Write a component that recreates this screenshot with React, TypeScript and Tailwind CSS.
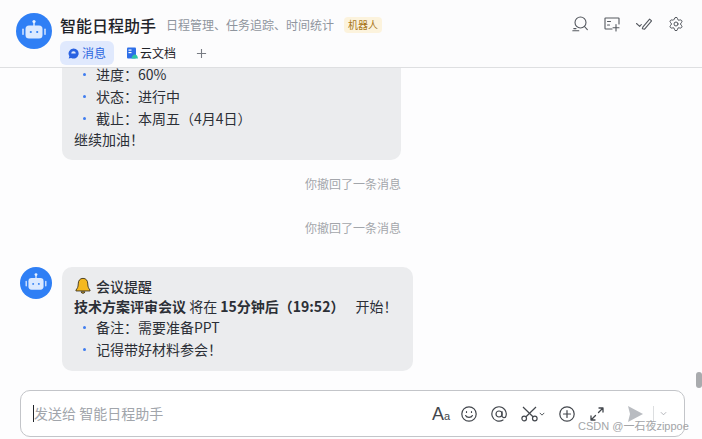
import { Settings } from "lucide-react";

const font = { fontFamily: '"Noto Sans CJK SC", sans-serif' };

function Bot({ big }: { big?: boolean }) {
  return (
    <div className={big ? "h-9 w-9 shrink-0 rounded-full bg-[#2f7ff5]" : "h-8 w-8 shrink-0 rounded-full bg-[#2f7ff5]"}>
      <svg viewBox="0 0 36 36" className="h-full w-full">
        <circle cx="18" cy="8.5" r="1.6" fill="#e8f1ff" />
        <rect x="17.3" y="9" width="1.4" height="4" fill="#e8f1ff" />
        <rect x="9.5" y="12.5" width="17" height="13" rx="3.5" fill="#dbe9ff" />
        <rect x="6.2" y="15.5" width="1.6" height="6.5" rx="0.8" fill="#cfe1ff" />
        <rect x="28.2" y="15.5" width="1.6" height="6.5" rx="0.8" fill="#cfe1ff" />
        <circle cx="14.8" cy="19" r="1.1" fill="#2f7ff5" />
        <circle cx="21.2" cy="19" r="1.1" fill="#2f7ff5" />
      </svg>
    </div>
  );
}

function Li({ children }: { children: React.ReactNode }) {
  return (
    <div className="flex h-[22px] items-center">
      <span className="ml-[9px] mr-[10px] h-[3px] w-[3px] rounded-full bg-[#3f7df0]" />
      <span>{children}</span>
    </div>
  );
}

function Revoked() {
  return <div className="pr-[301px] text-right text-[12px] leading-[18px] text-[#a3a6ab]">你撤回了一条消息</div>;
}

export default function App() {
  return (
    <div className="relative flex h-[439px] w-[702px] flex-col overflow-hidden bg-[#fdfdfe]" style={font}>
      <header className="flex h-[68px] shrink-0 border-b border-[#dedfe1] bg-[#fcfcfd]">
        <div className="ml-4 mt-[13px]"><Bot big /></div>
        <div className="ml-2 flex-1">
          <div className="mt-[15px] flex h-[20px] items-center">
            <span className="text-[16px] font-medium leading-[20px] text-[#1f2329]">智能日程助手</span>
            <span className="ml-[10px] text-[12px] text-[#8f959e]">日程管理、任务追踪、时间统计</span>
            <span className="ml-[10px] rounded-[4px] bg-[#fcf3dd] px-1 text-[10px] leading-[16px] text-[#a9771b]">机器人</span>
          </div>
          <div className="mt-[6px] flex items-center">
            <div className="flex h-6 w-[54px] items-center justify-center gap-[3px] rounded-[6px] bg-[#e0e9fd] text-[12px] text-[#2b66e0]">
              <svg viewBox="0 0 12 12" className="h-[11px] w-[11px]">
                <path d="M6 .5a5.5 5.5 0 1 1-2.6 10.3L.8 11.5l.7-2.5A5.5 5.5 0 0 1 6 .5z" fill="#2a62e2" />
                <path d="M3.5 5.2h5a2.4 2.4 0 0 1-5 0z" fill="#e0e9fd" transform="rotate(180 6 5.6)" />
              </svg>
              消息
            </div>
            <div className="ml-3 flex items-center gap-[2px] text-[12px] text-[#1f2329]">
              <svg viewBox="0 0 12 12" className="h-3 w-3">
                <rect x="1" y="0.5" width="9" height="11" rx="1" fill="#2e6fe8" />
                <rect x="2.5" y="2.5" width="3" height="1.2" fill="#fff" />
                <rect x="2.5" y="5" width="3" height="1.2" fill="#fff" />
                <path d="M5.5 11.5c.3-2.6 2-4 3.5-4s2.6 1.2 3 4z" fill="#2ec7a6" />
              </svg>
              云文档
            </div>
            <svg viewBox="0 0 12 12" className="ml-5 h-[11px] w-[11px]" stroke="#777b82" strokeWidth="1.2">
              <path d="M6 1v10M1 6h10" />
            </svg>
          </div>
        </div>
        <div className="mr-[18px] mt-4 flex h-4 gap-4">
          <svg viewBox="0 0 16 16" className="h-4 w-4" fill="none" stroke="#54585f" strokeWidth="1.1" strokeLinecap="round">
            <circle cx="8.5" cy="6.5" r="5.5" />
            <path d="M12.5 10.5l2.8 3.2M.8 14.8h6M1.8 12.6h2.2" />
          </svg>
          <svg viewBox="0 0 16 16" className="h-4 w-4" fill="none" stroke="#54585f" strokeWidth="1.1" strokeLinecap="round">
            <path d="M8 13H1.6a.6.6 0 0 1-.6-.6V2.6A.6.6 0 0 1 1.6 2h12.8a.6.6 0 0 1 .6.6V8" />
            <path d="M3.5 5.5h3M3.5 9h2M12 8.5v6.5M9 11.8h6" />
          </svg>
          <svg viewBox="0 0 16 16" className="h-4 w-4" fill="none" stroke="#54585f" strokeWidth="1.1" strokeLinecap="round" strokeLinejoin="round">
            <path d="M.5 7.5l3.2 2.8 1.6-1.8M6.3 12.8l2.3.3 7-8.3-2-1.7-6.8 8z" />
          </svg>
          <Settings size={16} color="#54585f" strokeWidth={1.5} />
        </div>
      </header>

      <main className="min-h-0 flex-1 overflow-hidden">
        <div className="-mt-[15px] ml-[62px] h-[107px] w-[339px] rounded-[10px] bg-[#ebecee] pl-3 pt-[10px] text-[14px] leading-[22px] text-[#2b2f36]">
          <Li>{"进度\uFF1A60%"}</Li>
          <Li>{"状态\uFF1A进行中"}</Li>
          <Li>{"截止\uFF1A本周五\uFF084月4日\uFF09"}</Li>
          <div className="h-[21px] leading-[21px]">{"继续加油\uFF01"}</div>
        </div>
        <div className="mt-[15px]"><Revoked /></div>
        <div className="mt-[26px]"><Revoked /></div>
        <div className="ml-5 mt-[30px] flex gap-[10px]">
          <Bot />
          <div className="h-[104px] w-[351px] rounded-[10px] bg-[#ebecee] px-3 pt-[9px] text-[14px] leading-[21px] text-[#2b2f36]">
            <div className="flex h-[20px] items-center gap-1 font-medium">
              <svg viewBox="0 0 18 20" className="h-[18px] w-[18px]">
                <path d="M9 1.5c3.5 0 5.3 2.7 5.3 6.2 0 3.6 1.2 5.2 2.5 6.8v1H1.2v-1c1.3-1.6 2.5-3.2 2.5-6.8C3.7 4.2 5.5 1.5 9 1.5z" fill="#f5b81f" stroke="#3a3320" strokeWidth="1" />
                <path d="M6.8 16.5a2.3 2.3 0 0 0 4.4 0z" fill="#f5b81f" stroke="#3a3320" strokeWidth="1" />
              </svg>
              会议提醒
            </div>
            <div className="flex h-[20px] items-center whitespace-pre">
              <span className="font-bold">技术方案评审会议</span>
              <span> 将在 </span>
              <span className="font-bold">{"15分钟后\uFF0819:52\uFF09"}</span>
              <span className="ml-2">{" 开始\uFF01"}</span>
            </div>
            <Li>{"备注\uFF1A需要准备PPT"}</Li>
            <Li>{"记得带好材料参会\uFF01"}</Li>
          </div>
        </div>
      </main>

      <footer className="mb-[2px] ml-5 flex h-[47px] w-[665px] shrink-0 items-center rounded-[10px] border border-[#c3c5c9] bg-white pl-3 pr-[17px]">
        <span className="h-[17px] w-px bg-[#1f2329]" />
        <span className="flex-1 text-[14px] text-[#a1a5ab]">发送给 智能日程助手</span>
        <div className="flex items-center">
          <span className="w-4 whitespace-nowrap text-[18px] leading-none text-[#43474d]" style={{ fontFamily: '"Liberation Sans", sans-serif' }}>
            A<span className="text-[11px]">a</span>
          </span>
          <svg viewBox="0 0 16 16" className="ml-[13px] h-4 w-4" fill="none" stroke="#43474d" strokeWidth="1.2" strokeLinecap="round">
            <circle cx="8" cy="8" r="7.2" />
            <path d="M4.6 9.5c1 2.4 5.8 2.4 6.8 0M5.5 5.7v.8M10.5 5.7v.8" />
          </svg>
          <svg viewBox="0 0 16 16" className="ml-[14px] h-4 w-4" fill="none" stroke="#43474d" strokeWidth="1.2" strokeLinecap="round">
            <circle cx="8" cy="8" r="3" />
            <path d="M11 5.5v3.8a2 2 0 0 0 4 .6A7.2 7.2 0 1 0 12 14" />
          </svg>
          <svg viewBox="0 0 17 17" className="ml-[14px] h-[17px] w-[17px]" fill="none" stroke="#43474d" strokeWidth="1.2">
            <circle cx="3.2" cy="13.5" r="2.3" />
            <circle cx="13.8" cy="13.5" r="2.3" />
            <path d="M2 2l10 9.8M15 2L5 11.8" />
          </svg>
          <svg viewBox="0 0 8 8" className="ml-px h-[6px] w-[6px]" fill="none" stroke="#43474d" strokeWidth="1.2">
            <path d="M1 2.5l3 3 3-3" />
          </svg>
          <svg viewBox="0 0 16 16" className="ml-[14px] h-4 w-4" fill="none" stroke="#43474d" strokeWidth="1.2" strokeLinecap="round">
            <circle cx="8" cy="8" r="7.2" />
            <path d="M8 4.5v7M4.5 8h7" />
          </svg>
          <svg viewBox="0 0 14 14" className="ml-[15px] h-[14px] w-[14px]" fill="none" stroke="#43474d" strokeWidth="1.3" strokeLinecap="round" strokeLinejoin="round">
            <path d="M9 1h4v4M13 1L8.5 5.5M1 9v4h4M1 13l4.5-4.5" />
          </svg>
          <svg viewBox="0 0 15 16" className="ml-6 h-4 w-[15px]">
            <path d="M0 0l15 8-15 8 2-8z" fill="#b9bcc1" />
          </svg>
          <span className="ml-[10px] h-[16px] w-px bg-[#dcdee0]" />
          <svg viewBox="0 0 8 8" className="ml-[6px] h-[7px] w-[7px]" fill="none" stroke="#a9acb1" strokeWidth="1">
            <path d="M1 2.5l3 3 3-3" />
          </svg>
        </div>
      </footer>

      <div className="absolute left-[696px] top-[372px] h-4 w-[6px] rounded-[3px] bg-[#a9abae]" />
      <div className="absolute left-[578px] top-[419px] text-[11px] leading-[14px] text-[#a3a5a8]" style={{ fontFamily: '"Liberation Sans", "Noto Sans CJK SC", sans-serif' }}>
        CSDN @一石夜zippoe
      </div>
    </div>
  );
}
